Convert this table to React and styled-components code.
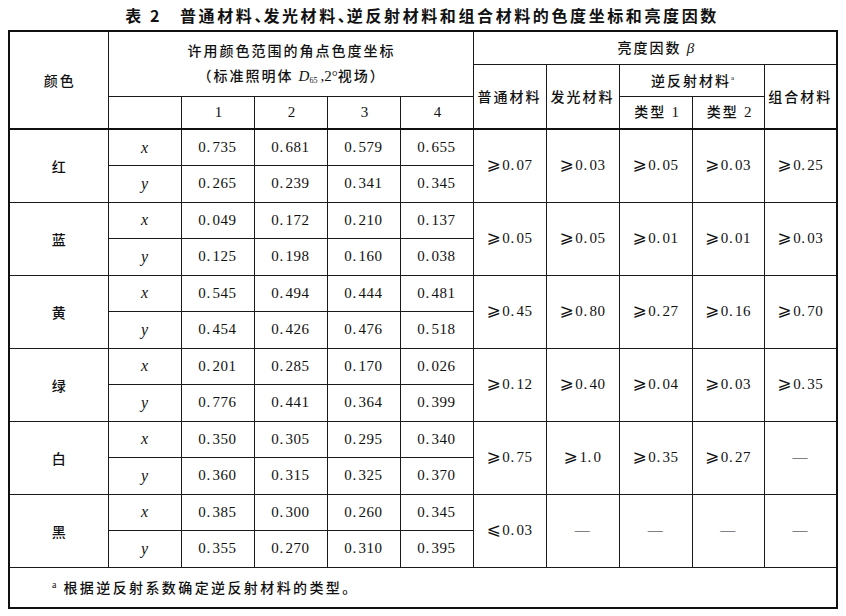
import React from "react";
import styled, { createGlobalStyle } from "styled-components";

const GlobalStyle = createGlobalStyle`
  html, body { margin: 0; padding: 0; background: #fff; }
  body {
    font-family: "Noto Sans CJK SC", "Noto Sans", sans-serif;
    color: #111;
  }
`;

const Page = styled.div`
  width: 846px;
  padding: 0 10px 0 8px;
  box-sizing: border-box;
`;

const Title = styled.div`
  height: 30px;
  line-height: 30px;
  text-align: center;
  font-family: "Noto Sans CJK SC", sans-serif;
  font-weight: 700;
  font-size: 16px;
  letter-spacing: 2.6px;
  color: #111;
`;

const TitleNo = styled.span`
  margin-right: 18px;
`;

const Comma = styled.span`
  font-feature-settings: "halt";
  letter-spacing: 1px;
`;

const Table = styled.table`
  width: 828px;
  border-collapse: collapse;
  table-layout: fixed;
  border: 2px solid #111;
`;

const Head = styled.thead`
  border-bottom: 2px solid #111;
`;

const HeadRow = styled.tr`
  height: ${(p) => p.$h}px;
`;

const BodyRow = styled.tr`
  height: ${(p) => p.$h || 36.5}px;
`;

const Th = styled.th`
  border: 1px solid #1a1a1a;
  padding: 0 0 0 ${(p) => (p.$tight ? 0 : 2)}px;
  text-align: center;
  vertical-align: middle;
  font-family: ${(p) =>
    p.$num ? `"Liberation Serif", serif` : `"Noto Sans CJK SC", sans-serif`};
  font-weight: ${(p) => (p.$num ? 400 : 500)};
  font-size: ${(p) => (p.$num ? 15 : 14)}px;
  letter-spacing: ${(p) => (p.$num ? 0 : 2)}px;
  line-height: 25px;
  color: #111;
`;

const Td = styled.td`
  border: 1px solid #1a1a1a;
  padding: 0;
  text-align: center;
  vertical-align: middle;
  color: #111;
`;

const NameCell = styled(Td)`
  font-family: "Noto Sans CJK SC", sans-serif;
  font-weight: 500;
  font-size: 14px;
`;

const VarCell = styled(Td)`
  font-family: "Liberation Serif", serif;
  font-style: italic;
  font-size: 16px;
`;

const NumCell = styled(Td)`
  font-family: "Liberation Serif", serif;
  font-size: 15px;
  letter-spacing: 0.6px;
`;

const NoteCell = styled(Td)`
  text-align: left;
  padding-left: 42px;
  font-family: "Noto Sans CJK SC", sans-serif;
  font-weight: 500;
  font-size: 14px;
  letter-spacing: 2.4px;
`;

const Dot = styled.span`
  margin-right: 1.6px;
`;

const Rel = styled.span`
  font-family: "DejaVu Serif", "DejaVu Sans", serif;
  font-size: 17px;
  line-height: 0;
  margin-right: 1px;
`;

const Dash = styled.span`
  font-family: "Liberation Serif", serif;
  font-size: 15px;
`;

const Sup = styled.sup`
  font-family: "Liberation Serif", serif;
  font-size: ${(p) => p.$size || 9}px;
  font-weight: 400;
  vertical-align: ${(p) => p.$lift || 6}px;
  line-height: 0;
  letter-spacing: 0;
  margin-right: ${(p) => p.$gap || 0}px;
`;

const Ital = styled.i`
  font-family: "Liberation Serif", serif;
  font-style: italic;
  font-size: 15px;
  font-weight: 400;
  letter-spacing: 0;
`;

const Sub = styled.sub`
  font-family: "Liberation Serif", serif;
  font-size: 8px;
  font-style: normal;
  vertical-align: -2px;
  line-height: 0;
  letter-spacing: 0;
  margin-right: 3px;
`;

const Plain = styled.span`
  font-family: "Liberation Serif", serif;
  font-weight: 400;
  letter-spacing: 0;
  font-size: 15px;
`;

function Num({ v }) {
  const [a, b] = v.split(".");
  return (
    <>
      {a}
      <Dot>.</Dot>
      {b}
    </>
  );
}

function Lum({ v }) {
  if (v === "—") return <Dash>—</Dash>;
  const rel = v[0];
  return (
    <>
      <Rel>{rel}</Rel>
      <Num v={v.slice(1)} />
    </>
  );
}

const data = [
  {
    name: "红",
    x: ["0.735", "0.681", "0.579", "0.655"],
    y: ["0.265", "0.239", "0.341", "0.345"],
    lum: ["⩾0.07", "⩾0.03", "⩾0.05", "⩾0.03", "⩾0.25"],
  },
  {
    name: "蓝",
    x: ["0.049", "0.172", "0.210", "0.137"],
    y: ["0.125", "0.198", "0.160", "0.038"],
    lum: ["⩾0.05", "⩾0.05", "⩾0.01", "⩾0.01", "⩾0.03"],
  },
  {
    name: "黄",
    x: ["0.545", "0.494", "0.444", "0.481"],
    y: ["0.454", "0.426", "0.476", "0.518"],
    lum: ["⩾0.45", "⩾0.80", "⩾0.27", "⩾0.16", "⩾0.70"],
  },
  {
    name: "绿",
    x: ["0.201", "0.285", "0.170", "0.026"],
    y: ["0.776", "0.441", "0.364", "0.399"],
    lum: ["⩾0.12", "⩾0.40", "⩾0.04", "⩾0.03", "⩾0.35"],
  },
  {
    name: "白",
    x: ["0.350", "0.305", "0.295", "0.340"],
    y: ["0.360", "0.315", "0.325", "0.370"],
    lum: ["⩾0.75", "⩾1.0", "⩾0.35", "⩾0.27", "—"],
  },
  {
    name: "黑",
    x: ["0.385", "0.300", "0.260", "0.345"],
    y: ["0.355", "0.270", "0.310", "0.395"],
    lum: ["⩽0.03", "—", "—", "—", "—"],
  },
];

const widths = [99, 73, 73, 73, 73, 73, 73, 73, 73, 72, 73];

export default function App() {
  return (
    <Page>
      <GlobalStyle />
      <Title>
        <TitleNo>表 2</TitleNo>普通材料<Comma>、</Comma>发光材料<Comma>、</Comma>
        逆反射材料和组合材料的色度坐标和亮度因数
      </Title>
      <Table>
        <colgroup>
          {widths.map((w, i) => (
            <col key={i} style={{ width: w }} />
          ))}
        </colgroup>
        <Head>
          <HeadRow $h={33}>
            <Th rowSpan={3}>颜色</Th>
            <Th colSpan={5} rowSpan={2}>
              许用颜色范围的角点色度坐标
              <br />
              （标准照明体 <Ital>D</Ital>
              <Sub>65</Sub>
              <Plain>,2°</Plain>视场）
            </Th>
            <Th colSpan={5}>
              亮度因数 <Ital>β</Ital>
            </Th>
          </HeadRow>
          <HeadRow $h={32}>
            <Th rowSpan={2} $tight>普通材料</Th>
            <Th rowSpan={2} $tight>发光材料</Th>
            <Th colSpan={2}>
              逆反射材料<Sup $size={7} $lift={6}>a</Sup>
            </Th>
            <Th rowSpan={2} $tight>组合材料</Th>
          </HeadRow>
          <HeadRow $h={33}>
            <Th />
            <Th $num>1</Th>
            <Th $num>2</Th>
            <Th $num>3</Th>
            <Th $num>4</Th>
            <Th>
              类型 <Plain>1</Plain>
            </Th>
            <Th>
              类型 <Plain>2</Plain>
            </Th>
          </HeadRow>
        </Head>
        <tbody>
          {data.map((row) => (
            <React.Fragment key={row.name}>
              <BodyRow>
                <NameCell rowSpan={2}>{row.name}</NameCell>
                <VarCell>x</VarCell>
                {row.x.map((v, i) => (
                  <NumCell key={i}>
                    <Num v={v} />
                  </NumCell>
                ))}
                {row.lum.map((v, i) => (
                  <NumCell key={"l" + i} rowSpan={2}>
                    <Lum v={v} />
                  </NumCell>
                ))}
              </BodyRow>
              <BodyRow>
                <VarCell>y</VarCell>
                {row.y.map((v, i) => (
                  <NumCell key={i}>
                    <Num v={v} />
                  </NumCell>
                ))}
              </BodyRow>
            </React.Fragment>
          ))}
          <BodyRow $h={41}>
            <NoteCell colSpan={11}>
              <Sup $size={10} $lift={5} $gap={7}>a</Sup>
              根据逆反射系数确定逆反射材料的类型。
            </NoteCell>
          </BodyRow>
        </tbody>
      </Table>
    </Page>
  );
}
